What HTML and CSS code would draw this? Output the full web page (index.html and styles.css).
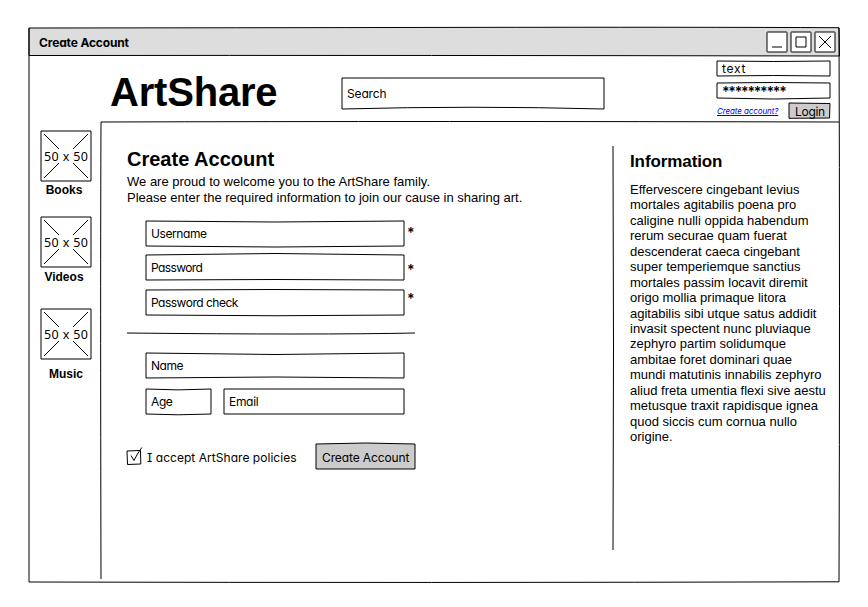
FILE: index.html
```html
<!DOCTYPE html>
<html lang="en">
<head>
<meta charset="utf-8">
<title>Create Account</title>
<link rel="stylesheet" href="styles.css">
</head>
<body>
<div class="window">
  <header class="titlebar">
    <svg class="ink bar" viewBox="0 0 810 28"><path d="M0 0Q200 -.2 430 -.6T810 -.3L810.5 28Q400 27.2 0 27.5Z"/></svg>
    <span class="window-title">Create Account</span>
    <div class="controls">
      <svg viewBox="0 0 22 22"><rect x="1" y="1" width="20" height="20" rx=".5"/><path d="M6 16H16"/></svg>
      <svg viewBox="0 0 22 22"><rect x="1" y="1" width="20" height="20" rx=".5"/><path d="M6 6H16V16H6Z"/></svg>
      <svg viewBox="0 0 22 22"><rect x="1" y="1" width="20" height="20" rx=".5"/><path d="M5 5L17 17M17 5L5 17"/></svg>
    </div>
  </header>
  <div class="masthead">
    <div class="logo">ArtShare</div>
    <div class="box search"><svg class="ink" viewBox="0 0 262 31"><path d="M0 0H262V31Q131 27.5 0 31Z"/></svg><span>Search</span></div>
    <div class="login">
      <div class="box small"><svg class="ink" viewBox="0 0 113 15"><path d="M0 0Q57 1 113 0V15Q57 14 0 15Z"/></svg><span class="typed">text</span></div>
      <div class="box small pass"><svg class="ink" viewBox="0 0 113 15"><path d="M0 0Q57 -1 113 0V15Q57 17 0 15Z"/></svg><span class="stars">**********</span></div>
      <div class="login-row">
        <a class="create-link">Create account?</a>
        <div class="box gray login-btn"><svg class="ink" viewBox="0 0 41 15"><path d="M0 0L41 .5L40.5 15L0 15.3Z"/></svg><span>Login</span></div>
      </div>
    </div>
  </div>
  <div class="body">
    <nav class="sidebar">
      <div class="category books"><svg class="thumb" viewBox="0 0 52 52"><path d="M1 1H51V51H1ZM4 4L19 19M48 4L33 19M4 48L19 33M48 48L33 33"/><text x="26" y="30.5" textLength="44">50 x 50</text></svg><b>Books</b></div>
      <div class="category videos"><svg class="thumb" viewBox="0 0 52 52"><path d="M1 1H51V51H1ZM4 4L19 19M48 4L33 19M4 48L19 33M48 48L33 33"/><text x="26" y="30.5" textLength="44">50 x 50</text></svg><b>Videos</b></div>
      <div class="category music"><svg class="thumb" viewBox="0 0 52 52"><path d="M1 1H51V51H1ZM4 4L19 19M48 4L33 19M4 48L19 33M48 48L33 33"/><text x="26" y="30.5" textLength="44">50 x 50</text></svg><b>Music</b></div>
    </nav>
    <main class="content">
      <h1>Create Account</h1>
      <p class="intro">We are proud to welcome you to the ArtShare family.<br>Please enter the required information to join our cause in sharing art.</p>
      <div class="form">
        <div class="row username"><div class="box field"><svg class="ink" viewBox="0 0 258 25"><path d="M0 0Q129 2 258 0V25Q129 27 0 25Z"/></svg><span class="w-user">Username</span></div><i class="star">*</i></div>
        <div class="row password"><div class="box field"><svg class="ink" viewBox="0 0 258 25"><path d="M0 0Q129 -3 258 0V25Q129 24 0 25Z"/></svg><span class="w-pass">Password</span></div><i class="star low">*</i></div>
        <div class="row check"><div class="box field"><svg class="ink" viewBox="0 0 258 25"><path d="M0 0Q129 -1 258 0V25Q129 26.5 0 25Z"/></svg><span class="w-check">Password check</span></div><i class="star high">*</i></div>
      </div>
      <svg class="divider" viewBox="0 0 288 4"><path d="M0 2Q190 4 288 2"/></svg>
      <div class="form">
        <div class="row name"><div class="box field"><svg class="ink" viewBox="0 0 258 25"><path d="M0 0Q129 3 258 0V25Q129 23 0 25Z"/></svg><span class="w-name">Name</span></div></div>
        <div class="row pair">
          <div class="box age"><svg class="ink" viewBox="0 0 65 25"><path d="M0 0Q32 1.8 65 0V25Q32 26.6 0 25Z"/></svg><span class="w-age">Age</span></div>
          <div class="box email"><svg class="ink" viewBox="0 0 180 25"><path d="M0 0H180V25H0Z"/></svg><span class="w-email">Email</span></div>
        </div>
      </div>
      <div class="submit-row">
        <svg class="checkbox" viewBox="0 0 16 18"><path d="M0 4L13.5 3.5L13.8 17L.5 17.5ZM4 8.5L7 13.5Q10 7 14.8 .5"/></svg>
        <span class="policies">I accept ArtShare policies</span>
        <div class="box gray submit"><svg class="ink" viewBox="0 0 99 25"><path d="M0 0Q50 -2 99 0V25H0Z"/></svg><span>Create Account</span></div>
      </div>
    </main>
    <aside class="info">
      <svg class="rule" viewBox="0 0 4 404"><path d="M2 0Q3 200 2 404"/></svg>
      <div class="info-text">
        <h2>Information</h2>
        <p>Effervescere cingebant levius<br>mortales agitabilis poena pro<br>caligine nulli oppida habendum<br>rerum securae quam fuerat<br>descenderat caeca cingebant<br>super temperiemque sanctius<br>mortales passim locavit diremit<br>origo mollia primaque litora<br>agitabilis sibi utque satus addidit<br>invasit spectent nunc pluviaque<br>zephyro partim solidumque<br>ambitae foret dominari quae<br>mundi matutinis innabilis zephyro<br>aliud freta umentia flexi sive aestu<br>metusque traxit rapidisque ignea<br>quod siccis cum cornua nullo<br>origine.</p>
      </div>
    </aside>
  </div>
  <svg class="ink frame" viewBox="0 0 810 554"><path d="M0 0V554Q400 555 810 553.8Q811 280 810 0M72 551Q71.3 250 72 94Q400 93 810 94"/></svg>
</div>
</body>
</html>
```
FILE: styles.css
```css
body {
  margin: 0;
  padding: 28px 0 25px 29px;
  background: #fff;
  color: #000;
  font: 13px/15.5px "Liberation Sans", Arial, sans-serif;
}

svg {
  fill: none;
  stroke: #000;
  stroke-width: 1;
  overflow: visible;
  flex: none;
}

.window {
  position: relative;
  width: 810px;
  height: 554px;
}

/* Hand-drawn outlines sit behind the text of their box. */
.ink {
  position: absolute;
  inset: 0;
  width: 100%;
  height: 100%;
  pointer-events: none;
}

.bar { fill: #ddd; }

.titlebar {
  position: relative;
  display: flex;
  justify-content: space-between;
  height: 28px;
}

.window-title,
.box,
.create-link,
.policies,
.star {
  font-family: "Comic Sans MS", Inter, sans-serif;
  font-feature-settings: "cv11", "cv08";
}

.window-title {
  position: relative;
  padding-left: 10px;
  font-size: 12px;
  font-weight: 700;
  line-height: 30px;
  letter-spacing: -0.15px;
}

.controls {
  position: relative;
  display: flex;
  gap: 2px;
  padding: 3px 3px 0 0;
}

.controls svg { width: 22px; height: 22px; }
.controls rect { fill: #fff; }

.masthead {
  display: flex;
  height: 66px;
}

.logo {
  width: 232px;
  padding-left: 81px;
  box-sizing: content-box;
  font-size: 40px;
  font-weight: 700;
  line-height: 72px;
  letter-spacing: -0.2px;
}

.box {
  position: relative;
  box-sizing: border-box;
  padding-left: 5px;
  font-size: 12px;
  line-height: 26px;
  white-space: nowrap;
}

.box span { position: relative; }
.gray .ink { fill: #ccc; }

.search {
  width: 262px;
  height: 31px;
  margin-top: 22px;
  line-height: 32px;
  letter-spacing: -0.15px;
}

.login { width: 113px; margin: 5px 0 0 113px; }
.small { height: 15px; line-height: 16px; }
.pass { margin-top: 7px; }
.typed { letter-spacing: 0.7px; }
.stars { font-size: 14px; font-weight: 600; letter-spacing: -1.2px; top: 1px; }

.login-row {
  display: flex;
  justify-content: space-between;
  margin-top: 5px;
}

.create-link {
  color: #00f;
  font-size: 8px;
  font-style: italic;
  line-height: 17px;
  letter-spacing: -0.1px;
  text-decoration: underline;
  white-space: nowrap;
}

.login-btn {
  width: 41px;
  height: 15px;
  padding-left: 6px;
  line-height: 18px;
  letter-spacing: -0.3px;
}

.body { display: flex; height: 460px; }

.sidebar {
  width: 72px;
  padding-top: 8px;
  box-sizing: border-box;
}

.category {
  display: flex;
  flex-direction: column;
  align-items: center;
  width: 74px;
  height: 86px;
}

.category b { font-size: 12px; line-height: 16px; }
.videos { height: 92px; }
.books b { margin-right: 4px; }
.videos b { margin: 1px 4px 0 0; }
.music b { margin-top: 6px; }
.thumb { width: 52px; height: 52px; }

.thumb text {
  fill: #000;
  stroke: none;
  font: 12.5px "Noto Sans", sans-serif;
  text-anchor: middle;
}

.content { width: 484px; padding: 25px 0 0 26px; }

h1 { margin: 0; font-size: 20px; line-height: 24px; }
.intro { margin: 3px 0 0; line-height: 16px; }
.form { padding-left: 19px; }
.row { display: flex; height: 25px; }
.field { width: 258px; height: 25px; }
.username { margin-top: 15px; }
.password { margin-top: 9px; }
.check { margin-top: 10px; }
.w-user { letter-spacing: -0.45px; margin-right: 1px; }
.w-user { letter-spacing: -0.4px; }
.w-pass { letter-spacing: -0.6px; }
.w-check { letter-spacing: -0.5px; }
.w-name { letter-spacing: -0.5px; }
.w-age { letter-spacing: -0.4px; }
.w-email { letter-spacing: -0.3px; }

.star {
  margin-left: 3px;
  font-size: 14px;
  font-style: normal;
  font-weight: 600;
  line-height: 24px;
}

.low { padding-top: 3px; }
.high { margin-top: -3px; }

.divider { display: block; width: 288px; height: 4px; margin-top: 16px; }
.name { margin-top: 18px; }
.pair { gap: 13px; margin-top: 11px; }
.age { width: 65px; }
.email { width: 180px; }

.submit-row { display: flex; height: 25px; margin-top: 30px; }
.checkbox { width: 16px; height: 18px; margin-top: 3px; }

.policies {
  width: 169px;
  padding-left: 4px;
  font-size: 12px;
  line-height: 28px;
  letter-spacing: 0.04px;
  white-space: nowrap;
}

.submit { width: 99px; padding-left: 6px; line-height: 28px; letter-spacing: -0.12px; }

.info { display: flex; padding-top: 24px; }
.rule { width: 4px; height: 404px; }
.info-text { padding-left: 15px; white-space: nowrap; }
h2 { margin: 6px 0 11px; font-size: 17px; line-height: 19px; letter-spacing: -0.1px; }
.info p { margin: 0; line-height: 15.43px; }
```
